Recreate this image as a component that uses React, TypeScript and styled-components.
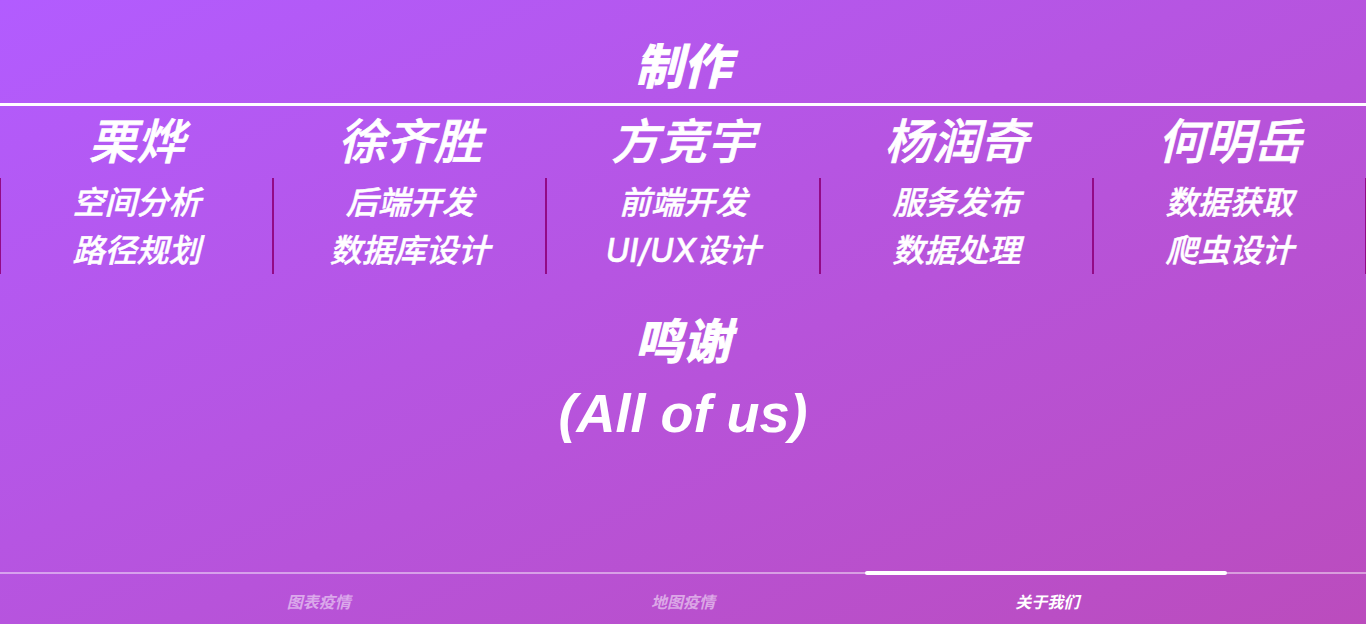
import React from 'react';
import styled, { createGlobalStyle } from 'styled-components';

const members = [
  { name: '栗烨', roles: ['空间分析', '路径规划'] },
  { name: '徐齐胜', roles: ['后端开发', '数据库设计'] },
  { name: '方竞宇', roles: ['前端开发', 'UI/UX设计'] },
  { name: '杨润奇', roles: ['服务发布', '数据处理'] },
  { name: '何明岳', roles: ['数据获取', '爬虫设计'] }
];

const tabs = ['图表疫情', '地图疫情', '关于我们'];

const GlobalStyle = createGlobalStyle`
  html, body {
    margin: 0;
    padding: 0;
    height: 100%;
  }

  body {
    font-family: 'Noto Sans CJK SC', 'Noto Sans', sans-serif;
    font-style: italic;
    color: #ffffff;
  }
`;

const Page = styled.div`
  width: 1366px;
  height: 624px;
  overflow: hidden;
  display: flex;
  flex-direction: column;
  background: linear-gradient(to bottom right, #b25cff 0%, #bb4cbd 100%);
`;

const Main = styled.main`
  flex: 1;
  padding-top: 32px;
`;

const Heading = styled.h1`
  margin: 0;
  height: 71px;
  font-size: 48px;
  font-weight: 700;
  line-height: 63px;
  text-align: center;
  -webkit-text-stroke: 1px #ffffff;
`;

const Rule = styled.div`
  height: 3px;
  background: #ffffff;
`;

const Team = styled.div`
  display: grid;
  grid-template-columns: repeat(5, 1fr);
`;

const Member = styled.div`
  display: flex;
  flex-direction: column;
  align-items: center;
  padding-top: 2px;
`;

const Name = styled.div`
  height: 60px;
  font-size: 48px;
  line-height: 60px;
  font-weight: 500;
  -webkit-text-stroke: 0.7px #ffffff;
`;

const Roles = styled.div`
  position: relative;
  align-self: stretch;
  height: 96px;
  margin-top: 10px;
  text-align: center;

  &::before {
    content: '';
    position: absolute;
    top: 0;
    bottom: 0;
    left: -1px;
    width: 2px;
    background: #930a86;
  }
`;

const LastRoles = styled(Roles)`
  &::after {
    content: '';
    position: absolute;
    top: 0;
    bottom: 0;
    right: -1px;
    width: 2px;
    background: #930a86;
  }
`;

const Role = styled.div`
  height: 48px;
  font-family: 'Inter', 'Noto Sans CJK SC', sans-serif;
  font-size: 32px;
  font-weight: 500;
  line-height: 50px;
  -webkit-text-stroke: 0.5px #ffffff;
`;

const Thanks = styled.div`
  margin-top: 28px;
  text-align: center;
`;

const ThanksTitle = styled.h2`
  margin: 0;
  height: 75px;
  font-size: 48px;
  font-weight: 700;
  line-height: 72px;
  -webkit-text-stroke: 1px #ffffff;
`;

const ThanksName = styled.div`
  font-family: 'Liberation Sans', sans-serif;
  height: 72px;
  font-size: 54px;
  font-weight: 700;
  line-height: 72px;
`;

const TabBar = styled.nav`
  height: 50px;
  flex: none;
  border-top: 2px solid rgba(255, 255, 255, 0.45);
  display: flex;
  justify-content: center;
`;

const Tab = styled.div<{ $active?: boolean }>`
  position: relative;
  width: 364.27px;
  text-align: center;
  font-size: 16px;
  font-weight: 700;
  line-height: 54px;
  color: ${p => (p.$active ? '#ffffff' : 'rgba(255, 255, 255, 0.5)')};

  &::before {
    content: '';
    display: ${p => (p.$active ? 'block' : 'none')};
    position: absolute;
    left: 0;
    right: 2px;
    top: -3px;
    height: 4px;
    border-radius: 2px;
    background: #ffffff;
  }
`;

export default function App() {
  return (
    <Page>
      <GlobalStyle />
      <Main>
        <Heading>制作</Heading>
        <Rule />
        <Team>
          {members.map((member, index) => {
            const Column = index === members.length - 1 ? LastRoles : Roles;
            return (
              <Member key={member.name}>
                <Name>{member.name}</Name>
                <Column>
                  {member.roles.map(role => (
                    <Role key={role}>{role}</Role>
                  ))}
                </Column>
              </Member>
            );
          })}
        </Team>
        <Thanks>
          <ThanksTitle>鸣谢</ThanksTitle>
          <ThanksName>(All of us)</ThanksName>
        </Thanks>
      </Main>
      <TabBar>
        {tabs.map((tab, index) => (
          <Tab key={tab} $active={index === 2}>
            {tab}
          </Tab>
        ))}
      </TabBar>
    </Page>
  );
}
